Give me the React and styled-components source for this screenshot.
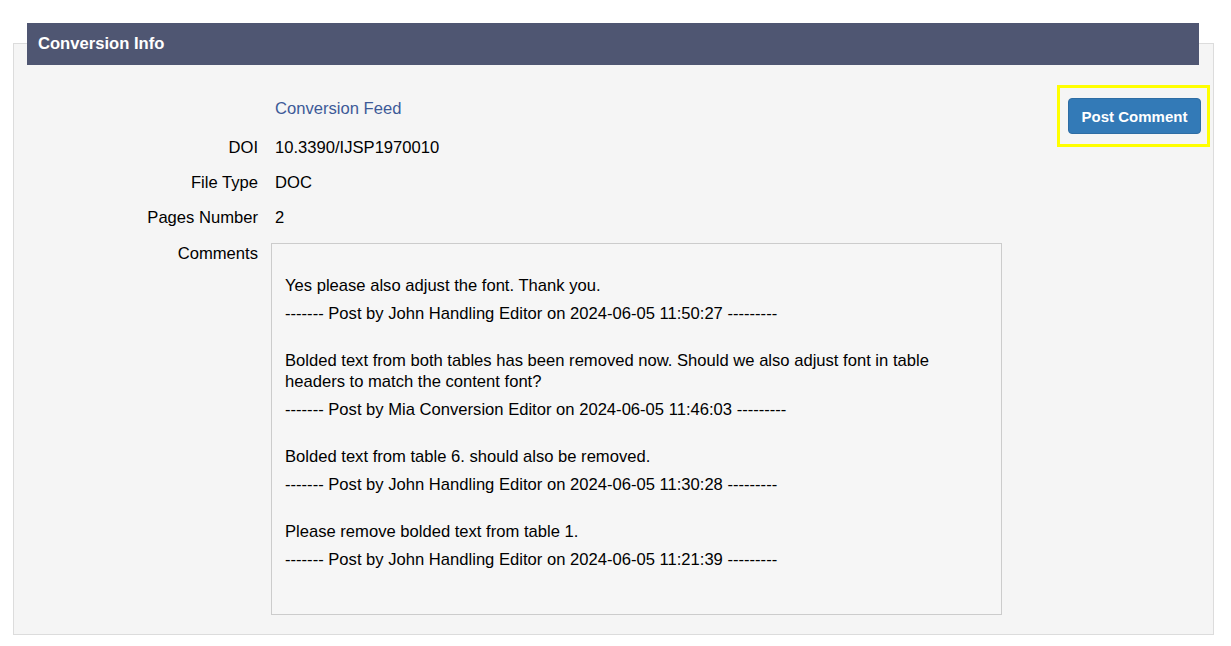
import React from "react";
import styled, { createGlobalStyle } from "styled-components";

const GlobalStyle = createGlobalStyle`
  body {
    margin: 0;
    background: #ffffff;
    font-family: "Liberation Sans", Arial, sans-serif;
    color: #000000;
  }
`;

const Page = styled.div`
  padding: 43px 0 12px 13px;
`;

// 패널 전체
const Panel = styled.div`
  box-sizing: border-box;
  width: 1201px;
  background: #f5f5f5;
  border: 1px solid #dcdcdc;
  padding-bottom: 19px;
`;

const PanelHeader = styled.div`
  margin: -21px 14px 0 13px;
  height: 42px;
  padding-left: 11px;
  display: flex;
  align-items: center;
  background: #4f5672;
  color: #ffffff;
  font-size: 16.6px;
  font-weight: bold;
`;

const PanelBody = styled.div`
  display: flex;
  justify-content: space-between;
  align-items: flex-start;
  padding: 20px 3px 0 0;
`;

// 라벨 / 값 그리드
const InfoGrid = styled.div`
  display: grid;
  grid-template-columns: 244px 731px;
  column-gap: 13px;
  row-gap: 15px;
  padding-top: 14px;
  font-size: 16.6px;
  line-height: 20px;
`;

const Label = styled.div`
  text-align: right;
  margin-top: ${(p) => p.$offset || 0}px;
`;

const Value = styled.div`
  padding-left: 4px;
  margin-top: ${(p) => p.$offset || 0}px;
`;

const FeedLink = styled.a`
  color: #3d5a98;
  text-decoration: none;
  cursor: pointer;
`;

const CommentBox = styled.div`
  box-sizing: border-box;
  height: 372px;
  border: 1px solid #cccccc;
  background: #f6f6f6;
  padding: 31px 13px;
  display: flex;
  flex-direction: column;
  gap: 26px;
  font-size: 16.6px;
  line-height: 21px;
`;

const CommentEntry = styled.div`
  display: flex;
  flex-direction: column;
  gap: 7px;
`;

const Highlight = styled.div`
  border: 3px solid #ffff00;
  padding: 10px 6px 10px 8px;
`;

const PostButton = styled.button`
  display: block;
  width: 133px;
  height: 36px;
  border: 1px solid #2e6da4;
  border-radius: 4px;
  background: #337ab7;
  color: #ffffff;
  font-family: "Liberation Sans", Arial, sans-serif;
  font-size: 15px;
  font-weight: bold;
  cursor: pointer;
`;

const comments = [
  {
    text: "Yes please also adjust the font. Thank you.",
    by: "John Handling Editor",
    at: "2024-06-05 11:50:27",
  },
  {
    text: "Bolded text from both tables has been removed now. Should we also adjust font in table headers to match the content font?",
    by: "Mia Conversion Editor",
    at: "2024-06-05 11:46:03",
  },
  {
    text: "Bolded text from table 6. should also be removed.",
    by: "John Handling Editor",
    at: "2024-06-05 11:30:28",
  },
  {
    text: "Please remove bolded text from table 1.",
    by: "John Handling Editor",
    at: "2024-06-05 11:21:39",
  },
];

const App = () => {
  return (
    <>
      <GlobalStyle />
      <Page>
        <Panel>
          <PanelHeader>Conversion Info</PanelHeader>
          <PanelBody>
            <InfoGrid>
              <Label />
              <Value>
                <FeedLink>Conversion Feed</FeedLink>
              </Value>
              <Label $offset={4}>DOI</Label>
              <Value $offset={4}>10.3390/IJSP1970010</Value>
              <Label>File Type</Label>
              <Value>DOC</Value>
              <Label>Pages Number</Label>
              <Value>2</Value>
              <Label $offset={1}>Comments</Label>
              <CommentBox>
                {comments.map((c, i) => (
                  <CommentEntry key={i}>
                    <div>{c.text}</div>
                    <div>
                      ------- Post by {c.by} on {c.at} ---------
                    </div>
                  </CommentEntry>
                ))}
              </CommentBox>
            </InfoGrid>
            <Highlight>
              <PostButton>Post Comment</PostButton>
            </Highlight>
          </PanelBody>
        </Panel>
      </Page>
    </>
  );
};

export default App;
